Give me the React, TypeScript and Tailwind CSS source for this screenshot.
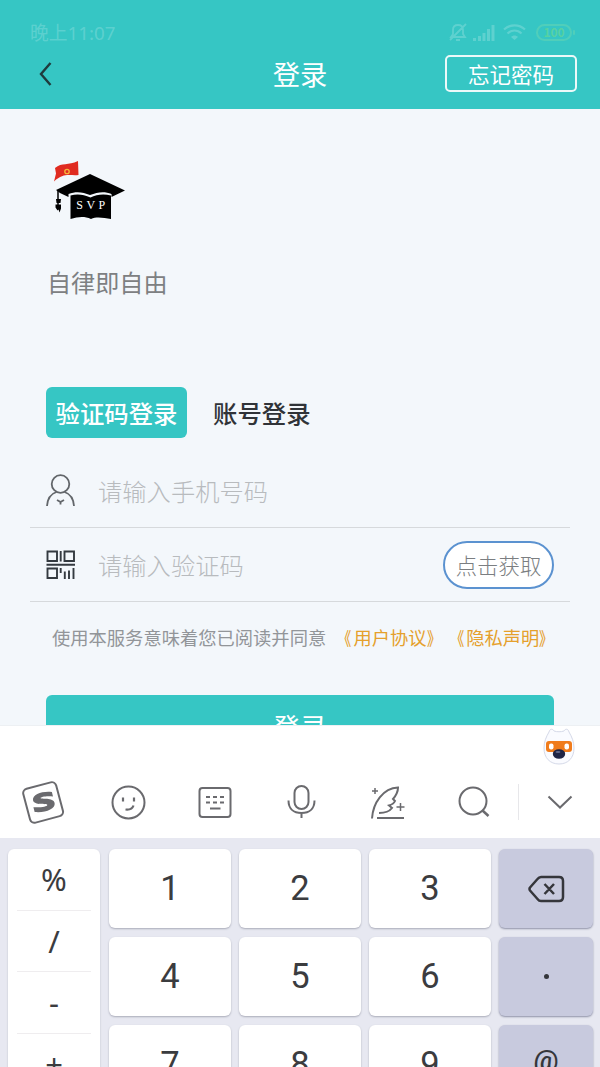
import { useState } from 'react'

const rowKeys = [
  ['1', '2', '3'],
  ['4', '5', '6'],
  ['7', '8', '9'],
]
const symbols = ['%', '/', '-', '+']

function StatusBar() {
  return (
    <div className="flex h-[26px] items-center justify-between pl-[30px] pr-[25px] text-white/20">
      <span className="font-['Noto_Sans','Noto_Sans_CJK_SC',sans-serif] text-[18.800px] leading-none">晚上11:07</span>
      <div className="-mt-[2px] flex items-center">
        <svg width="20" height="20" viewBox="0 0 20 20" fill="none" stroke="currentColor" strokeWidth="1.8">
          <path d="M3 15h14l-2-3V8c0-3-2-5-5-5S5 5 5 8v4l-2 3zM8 18h4M2 18L18 2" />
        </svg>
        <svg className="ml-[5px]" width="22" height="17" viewBox="0 0 22 17" fill="currentColor">
          <path d="M0 14h3v3H0zM5 12h3v5H5zM9.500 9h3v8h-3zM14 5h3v12h-3zM18.500 1h3v16h-3z" />
        </svg>
        <svg className="ml-2" width="23" height="17" viewBox="0 0 23 17" fill="none" stroke="currentColor" strokeWidth="2.200">
          <path d="M1 5.500c6-5.500 15-5.500 21 0M4.500 9.500c4-4 10-4 14 0" />
          <path d="M8 13c2-2 5-2 7 0l-3.500 3z" fill="currentColor" stroke="none" />
        </svg>
        <span className="ml-[10px] flex h-[17px] w-[36px] items-center justify-center rounded-full border-2 border-[#62d3b4]/60 text-[12px] font-bold leading-none text-[#6fd98c]/60">
          100
        </span>
        <span className="ml-px h-[5px] w-[2px] rounded bg-[#62d3b4]/60" />
      </div>
    </div>
  )
}

function Header() {
  return (
    <header className="h-[109px] shrink-0 bg-[#36c6c4] pt-5">
      <StatusBar />
      <div className="mt-[9px] grid h-[37px] grid-cols-3 items-center pl-[39px] pr-[23px]">
        <svg width="13" height="24" viewBox="0 0 13 24" fill="none" stroke="#1f3b3d" strokeWidth="2.400">
          <path d="M11.500 1L2 12l9.500 11" />
        </svg>
        <h1 className="-ml-[16px] text-center text-[27.300px] leading-none text-white">登录</h1>
        <button className="h-[37px] w-[132px] justify-self-end rounded-[5px] border-2 border-white/90 text-[21.500px] leading-none text-white">
          忘记密码
        </button>
      </div>
    </header>
  )
}

function Logo() {
  return (
    <svg width="74" height="62" viewBox="0 0 74 62">
      <path d="M3 8C10 2 16 6 26 1l.5 14C18 16 12 12 2 21.500l2-8z" fill="#e02b20" />
      <circle cx="15" cy="11.500" r="2.200" fill="none" stroke="#f6b73c" strokeWidth="1.300" />
      <path d="M4 30L38 14 73 30.500 59.500 37V34c-7-3-14-2-21.500 1-7-3-14-4-21.500-1v3L8 33z" fill="#000" />
      <path d="M6 30v19" stroke="#000" strokeWidth="1.500" />
      <path d="M4 39h5l-.5 4h-4zM3.500 44.500h5.500v4l-1.500 4-1-3-1 1-2-3z" fill="#000" />
      <path d="M18.500 35.500c7-2 13-1 20 2 6-3 13-4 20.500-2V59c-7-1-14-3-20 0-7-3-13-2-20.500 0z" fill="#000" />
      <text x="40.500" y="49" textAnchor="middle" fill="#fff" fontSize="12" letterSpacing="3.500" fontFamily="Liberation Serif, serif">
        SVP
      </text>
    </svg>
  )
}

function UserIcon() {
  return (
    <svg width="30" height="33" viewBox="0 0 30 33" fill="none" stroke="#62666a" strokeWidth="1.800">
      <circle cx="14.500" cy="10" r="8.800" />
      <path d="M1 32c.5-8 5-12.500 9.500-14M28 32c-.5-8-5-12.500-9.500-14M11 26l3.500 2L18 26M14.500 28v2.500" />
    </svg>
  )
}

function CodeIcon() {
  return (
    <svg width="30" height="30" viewBox="0 0 30 30" fill="none" stroke="#343a40" strokeWidth="1.900">
      <path d="M1.500 1.500h9.500v9.500H1.500zM18.500 1.500H28v9.500h-9.500zM1.500 18.500h9.500V28H1.500zM14.700 1v10.500M.5 14.700h28.500M14.700 18v5M18.800 21.500V29M23 20.500V29M27.500 18v11" />
    </svg>
  )
}

function DocLink({ name }: { name: string }) {
  return (
    <a className="text-[#e5a02c]">
      <span className="inline-block origin-right -translate-x-[2px] scale-x-[.75] font-medium">《</span>
      {name}
      <span className="inline-block origin-left scale-x-[.75] font-medium">》</span>
    </a>
  )
}

function LoginForm() {
  const [tab, setTab] = useState('code')
  const active = 'bg-[#36c6c4] text-white'
  const idle = 'text-[#303338]'

  return (
    <main className="h-[616px] shrink-0 overflow-hidden bg-[#f3f7fb] px-[30px] pt-[51px]">
      <div className="pl-[22px]">
        <Logo />
      </div>
      <p className="mt-[43px] pl-[17px] text-[24.100px] leading-[34px] text-[#7d8082]">自律即自由</p>

      <div className="mt-[88px] flex pl-4">
        <button
          onClick={() => setTab('code')}
          className={`h-[51px] w-[141px] rounded-md pt-px text-[24.400px] font-medium leading-none ${tab === 'code' ? active : idle}`}
        >
          验证码登录
        </button>
        <button
          onClick={() => setTab('account')}
          className={`ml-4 h-[51px] rounded-md px-[10px] pt-px text-[24.400px] font-medium leading-none ${tab === 'account' ? active : idle}`}
        >
          账号登录
        </button>
      </div>

      <div className="mt-4 flex h-[74px] items-center border-b border-[#d6d9dc] pl-4">
        <UserIcon />
        <input
          className="ml-[22px] w-[300px] text-[24.300px] font-light leading-[34px] outline-none placeholder:text-[#b8bbbe]"
          placeholder="请输入手机号码"
        />
      </div>
      <div className="flex h-[74px] items-center border-b border-[#d6d9dc] pl-4 pr-4">
        <CodeIcon />
        <input
          className="ml-[22px] w-[300px] text-[24.300px] font-light leading-[34px] outline-none placeholder:text-[#b8bbbe]"
          placeholder="请输入验证码"
        />
        <button className="ml-auto h-12 w-[111px] shrink-0 rounded-full border-2 border-[#5b92d0] bg-white text-[21.400px] font-light leading-none text-[#7b7e81]">
          点击获取
        </button>
      </div>

      <p className="mt-[22px] flex gap-[3px] whitespace-nowrap pl-[22px] text-[18.300px] leading-[26px] text-[#929599]">
        <span className="mr-[6px]">使用本服务意味着您已阅读并同意</span>
        <DocLink name="用户协议" />
        <DocLink name="隐私声明" />
      </p>

      <button className="mx-4 mt-[45px] flex h-16 w-[508px] justify-center rounded-md bg-[#36c6c4] pt-[18px] text-[27px] leading-none text-white">
        登录
      </button>
    </main>
  )
}

function Mascot() {
  return (
    <svg width="34" height="38" viewBox="0 0 34 38">
      <path d="M7 4c1-4 4-3 5-1 3 1 7 1 10 0 1-2 4-3 5 1 3 5 5 10 5 16 0 10-6 16-15 16S2 30 2 20C2 14 4 9 7 4z" fill="#fafbff" stroke="#d5d9e8" strokeWidth="1" />
      <rect x="4" y="13" width="26" height="11" rx="3" fill="#f07c1c" />
      <rect x="7" y="15.500" width="4.500" height="6" rx="2" fill="#fff" />
      <rect x="22.500" y="15.500" width="4.500" height="6" rx="2" fill="#fff" />
      <ellipse cx="17" cy="26" rx="6.200" ry="4.800" fill="#1e2445" />
      <ellipse cx="16" cy="24" rx="2.500" ry="1" fill="#62688a" />
    </svg>
  )
}

function Toolbar() {
  const stroke = { fill: 'none', stroke: '#6a6a6e', strokeWidth: 2 }
  return (
    <div className="flex h-[72px] items-center">
      <div className="flex w-[86px] justify-center">
        <svg width="44" height="44" viewBox="0 0 44 44" {...stroke}>
          <rect x="5" y="5" width="34" height="35" rx="4.500" transform="rotate(-15 22 22)" />
          <path d="M32 13.500l.6 4.500C27 16.500 20.500 17 20.500 18.300c0 1.500 12.500.3 13 6.200.4 6-10 8.500-20 6.500l-.7-4.800c6 1.300 13.500.8 13.500-.7 0-1.700-12.800-.3-13.200-5.800C12.800 13.500 23.500 11.500 32 13.500z" fill="#6a6a6e" stroke="none" transform="translate(-1.500 -1) rotate(-6 22 22) scale(1.040)" />
        </svg>
      </div>
      <div className="flex w-[86px] justify-center">
        <svg width="36" height="36" viewBox="0 0 36 36" {...stroke}>
          <circle cx="17.500" cy="18.500" r="16" />
          <path d="M12 13.500v4M23 13.500v4M14.500 25.500c4 .5 7-1 8-4" strokeWidth="2.200" />
        </svg>
      </div>
      <div className="flex w-[86px] justify-center">
        <svg width="34" height="32" viewBox="0 0 34 32" {...stroke}>
          <rect x="1.500" y="2" width="31" height="29" rx="3" />
          <path d="M8 11h4M15 11h4M22 11h4M8 16.500h4M15 16.500h4M22 16.500h4M12 22.500h10.500" />
        </svg>
      </div>
      <div className="flex w-[86px] justify-center">
        <svg width="30" height="36" viewBox="0 0 30 36" {...stroke}>
          <rect x="8.500" y="2" width="14" height="23" rx="7" />
          <path d="M2.500 16.500c0 8 5 12.500 13 12.500s13-4.500 13-12.500M15.500 29v5" />
        </svg>
      </div>
      <div className="flex w-[86px] justify-center">
        <svg width="36" height="36" viewBox="0 0 36 36" {...stroke}>
          <path d="M3 34.500C4 19 14 4 29 3.500c0 5-2 8-5 11.500l2 2c-1 2.500-3 3.500-6 4.500l3 2.500c-3 4-7 5-13 5M8 34h27" />
          <path d="M6 4v6M3 7h6M31.500 19v8M27.500 23h8" strokeWidth="1.500" />
        </svg>
      </div>
      <div className="flex w-[88px] justify-center">
        <svg width="32" height="32" viewBox="0 0 32 32" {...stroke}>
          <circle cx="15" cy="15" r="13.500" />
          <path d="M24.500 24.500L30.500 30" strokeWidth="2.500" />
        </svg>
      </div>
      <div className="flex h-9 flex-1 items-center justify-center border-l border-[#e7e7ea]">
        <svg width="26" height="15" viewBox="0 0 26 15" {...stroke}>
          <path d="M1.500 1.500L13 12.500l11.500-11" />
        </svg>
      </div>
    </div>
  )
}

function SideKey({ children }: { children: React.ReactNode }) {
  return (
    <div className="flex h-[79px] w-[94px] items-center justify-center rounded-[6px] bg-[#c8cade] text-[#35363b] shadow-[0_1px_2px_#8d90a6]">
      {children}
    </div>
  )
}

function Keyboard() {
  return (
    <section className="flex-1 bg-white font-[Roboto,'Noto_Sans_CJK_SC',sans-serif]">
      <div className="flex h-[41px] justify-end border-t border-[#edf0f3] pr-6 pt-[2px]">
        <Mascot />
      </div>
      <Toolbar />
      <div className="flex h-[300px] gap-[9px] bg-[#e7e8f1] pl-2 pt-[11px] text-[#3b3c3f]">
        <div className="h-[320px] w-[92px] rounded-[6px] bg-white px-[9px] shadow-[0_1px_2px_#b7b9c6]">
          {symbols.map((s) => (
            <div key={s} className="flex h-[61.500px] items-center justify-center border-b border-[#efedef] pt-px font-['Noto_Sans',sans-serif] text-[31px] leading-none">
              {s}
            </div>
          ))}
        </div>
        <div className="flex flex-col gap-[9px]">
          {rowKeys.map((row) => (
            <div key={row[0]} className="flex gap-2">
              {row.map((k) => (
                <button key={k} className="h-[79px] w-[122px] rounded-[6px] bg-white pb-px text-[34.500px] leading-none shadow-[0_1px_2px_#a9abb8]">
                  {k}
                </button>
              ))}
            </div>
          ))}
        </div>
        <div className="-ml-px flex flex-col gap-[9px]">
          <SideKey>
            <svg width="37" height="28" viewBox="0 0 37 28" fill="none" stroke="currentColor" strokeWidth="2.500" strokeLinejoin="round">
              <path d="M13 2h18q4 0 4 4v16q0 4-4 4H13q-2 0-3.500-2L2 15.500q-1-1.500 0-3L9.500 4Q11 2 13 2zM16.500 9l9.500 10M26 9l-9.500 10" />
            </svg>
          </SideKey>
          <SideKey>
            <span className="h-[5px] w-[5px] rounded-full bg-current" />
          </SideKey>
          <SideKey>
            <span className="-mt-2 text-[28px] font-medium leading-none">@</span>
          </SideKey>
        </div>
      </div>
    </section>
  )
}

export default function App() {
  return (
    <div className="flex h-[1067px] w-[600px] flex-col overflow-hidden font-['Noto_Sans_CJK_SC',sans-serif]">
      <Header />
      <LoginForm />
      <Keyboard />
    </div>
  )
}
